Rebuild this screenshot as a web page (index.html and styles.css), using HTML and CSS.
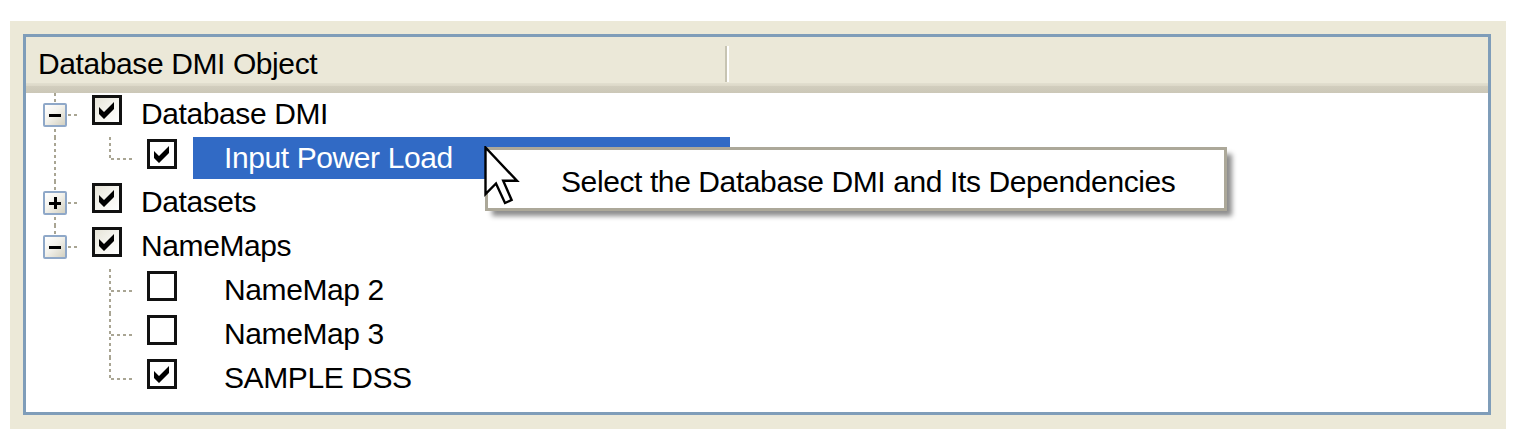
FILE: index.html
```html
<!DOCTYPE html>
<html>
<head>
<meta charset="utf-8">
<title>Database DMI Object</title>
<link rel="stylesheet" href="styles.css">
</head>
<body>
<div class="frame">
  <div class="list">
    <div class="header"><div class="col">Database DMI Object</div></div>
    <div class="tree">
      <div class="row">
        <span class="cell v-full h"><span class="exp minus"></span></span>
        <span class="chk l1 on"><svg viewBox="0 0 24 24"><path d="M4 9 L9 14 L19 4 L19 11 L9 21 L4 16 Z"/></svg></span>
        <span class="label l1">Database DMI</span>
      </div>
      <div class="row">
        <span class="cell v-full"></span>
        <span class="cell2 v-top h"></span>
        <span class="chk on"><svg viewBox="0 0 24 24"><path d="M4 9 L9 14 L19 4 L19 11 L9 21 L4 16 Z"/></svg></span>
        <span class="label sel">Input Power Load</span>
      </div>
      <div class="row">
        <span class="cell v-full h"><span class="exp plus"></span></span>
        <span class="chk l1 on"><svg viewBox="0 0 24 24"><path d="M4 9 L9 14 L19 4 L19 11 L9 21 L4 16 Z"/></svg></span>
        <span class="label l1">Datasets</span>
      </div>
      <div class="row">
        <span class="cell v-top h"><span class="exp minus"></span></span>
        <span class="chk l1 on"><svg viewBox="0 0 24 24"><path d="M4 9 L9 14 L19 4 L19 11 L9 21 L4 16 Z"/></svg></span>
        <span class="label l1">NameMaps</span>
      </div>
      <div class="row">
        <span class="cell"></span>
        <span class="cell2 v-full h"></span>
        <span class="chk"></span>
        <span class="label">NameMap 2</span>
      </div>
      <div class="row">
        <span class="cell"></span>
        <span class="cell2 v-full h"></span>
        <span class="chk"></span>
        <span class="label">NameMap 3</span>
      </div>
      <div class="row">
        <span class="cell"></span>
        <span class="cell2 v-top h"></span>
        <span class="chk on"><svg viewBox="0 0 24 24"><path d="M4 9 L9 14 L19 4 L19 11 L9 21 L4 16 Z"/></svg></span>
        <span class="label">SAMPLE DSS</span>
      </div>
    </div>
  </div>

  <div class="menu">
    <div class="item">Select the Database DMI and Its Dependencies</div>
  </div>

  <svg class="cursor" viewBox="0 0 12 20" width="36" height="60">
    <path d="M0.5 0.5 L0.5 16 L4 12.5 L7 19 L9.2 18 L6.4 11.6 L11 11.6 Z" fill="#fff" stroke="#000" stroke-width="0.8" stroke-linejoin="miter"/>
  </svg>
</div>
</body>
</html>
```

FILE: styles.css
```css
html, body {
  margin: 0;
  padding: 0;
  background: #ffffff;
}

body {
  font-family: "Liberation Sans", Arial, sans-serif;
  font-size: 30px;
  letter-spacing: -0.4px;
  color: #000;
}

.frame {
  position: relative;
  margin: 21px 0 0 10px;
  width: 1496px;
  height: 408px;
  box-sizing: border-box;
  padding: 13px 15px 14px 13px;
  background: #ece9d8;
}

.list {
  width: 1468px;
  height: 381px;
  box-sizing: border-box;
  border: 3px solid #7f9db9;
  background: #ffffff;
  display: flex;
  flex-direction: column;
}

.header {
  height: 56px;
  flex: none;
  display: flex;
  background: linear-gradient(to bottom,
    #ebe8d8 0, #ebe8d8 46px,
    #e2dfcf 46px, #dcd8c8 49px,
    #d2cebe 49px, #cbc7b7 56px);
}

.col {
  width: 701px;
  height: 36px;
  margin-top: 9px;
  box-sizing: border-box;
  padding-left: 12px;
  line-height: 36px;
  border-right: 2px solid #c7c4b2;
  box-shadow: 2px 0 0 #ffffff;
  white-space: nowrap;
}

.tree {
  display: flex;
  flex-direction: column;
}

.row {
  display: flex;
  align-items: flex-start;
  height: 44px;
}

.cell, .cell2 {
  flex: none;
  height: 44px;
  display: flex;
  align-items: center;
  background-repeat: no-repeat;
}

.cell {
  width: 54px;
  padding-left: 17px;
  box-sizing: border-box;
  --vx: 28px;
  --hw: 25px;
}

.cell2 {
  width: 55px;
  --vx: 29px;
  --hw: 25px;
}

.v-full {
  background-image: repeating-linear-gradient(to bottom, #a9a593 0 3px, transparent 3px 6px);
  background-position: var(--vx) 0;
  background-size: 2px 44px;
}

.v-top {
  background-image: repeating-linear-gradient(to bottom, #a9a593 0 3px, transparent 3px 6px);
  background-position: var(--vx) 0;
  background-size: 2px 23px;
}

.v-full.h, .v-top.h {
  background-image:
    repeating-linear-gradient(to bottom, #a9a593 0 3px, transparent 3px 6px),
    repeating-linear-gradient(to right, #a9a593 0 3px, transparent 3px 6px);
  background-position: var(--vx) 0, calc(var(--vx) + 2px) 21px;
}

.v-full.h { background-size: 2px 44px, var(--hw) 2px; }
.v-top.h { background-size: 2px 23px, var(--hw) 2px; }

.exp {
  width: 24px;
  height: 24px;
  box-sizing: border-box;
  border: 2px solid #8fa8c8;
  border-radius: 2px;
  background: linear-gradient(135deg, #ffffff 0%, #f3f2ec 45%, #d3d0c0 100%);
  display: flex;
  align-items: center;
  justify-content: center;
}

.exp::before {
  content: "";
  width: 12px;
  height: 3px;
  background: #000;
}

.plus {
  background-image:
    linear-gradient(#000, #000),
    linear-gradient(135deg, #ffffff 0%, #f3f2ec 45%, #d3d0c0 100%);
  background-size: 3px 12px, 100% 100%;
  background-position: center, 0 0;
  background-repeat: no-repeat;
}

.chk {
  flex: none;
  width: 30px;
  height: 30px;
  margin-top: 2px;
  margin-left: 12px;
  box-sizing: border-box;
  border: 3px solid #111;
  background: #ffffff;
  display: flex;
}

.chk.l1 {
  background: linear-gradient(135deg, #e6e4d8 0%, #f5f4ee 50%, #ffffff 100%);
}

.chk svg {
  display: block;
  flex: none;
  width: 24px;
  height: 24px;
  fill: #000;
}

.label {
  flex: none;
  height: 42px;
  line-height: 41px;
  margin-left: 16px;
  padding-left: 31px;
  white-space: nowrap;
}

.label.l1 {
  margin-left: 19px;
  padding-left: 0;
}

.label.sel {
  width: 537px;
  box-sizing: border-box;
  background: #316ac5;
  color: #ffffff;
}

.menu {
  position: absolute;
  left: 475px;
  top: 126px;
  width: 742px;
  height: 64px;
  box-sizing: border-box;
  border: 3px solid #aca899;
  background: #ffffff;
  box-shadow: 6px 6px 5px -1px rgba(0, 0, 0, 0.45);
}

.item {
  padding: 6px 0 0 73px;
  line-height: 52px;
  white-space: nowrap;
}

.cursor {
  position: absolute;
  left: 474px;
  top: 125px;
}
```
